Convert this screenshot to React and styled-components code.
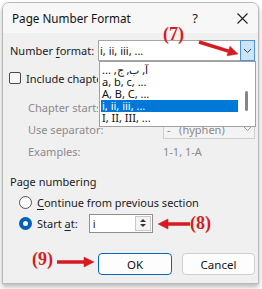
import React from 'react';
import styled, { createGlobalStyle } from 'styled-components';

const Global = createGlobalStyle`
  html, body { margin: 0; padding: 0; background: #ffffff; }
  body {
    font-family: "Noto Sans", "Open Sans", sans-serif;
    font-size: 11px;
    color: #1b1b1b;
  }
  * { box-sizing: border-box; }
`;

const Stage = styled.div`
  position: relative;
  width: 262px;
  height: 289px;
  padding: 2px 3px 0 2px;
  background: #ffffff;
  overflow: hidden;
`;

const Window = styled.div`
  width: 257px;
  border: 1px solid #b9b9b9;
  border-radius: 7px 7px 0 0;
  background: #f0f0f0;
  box-shadow: 0 3px 5px rgba(0, 0, 0, 0.28);
  overflow: hidden;
`;

const TitleBar = styled.div`
  height: 30px;
  display: flex;
  align-items: center;
  background: #f7f7f7;
  padding-left: 9px;
`;

const Title = styled.div`
  flex: 1;
  font-size: 11.7px;
  color: #111;
`;

const TitleButton = styled.div`
  width: 32px;
  height: 30px;
  display: flex;
  align-items: center;
  justify-content: center;
  color: #222;
  font-size: 13px;
  margin-right: ${p => p.$gap || 0}px;
`;

const Body = styled.div`
  padding: 0 3px 8px 7px;
  display: flex;
  flex-direction: column;
`;

const Row = styled.div`
  display: flex;
  align-items: center;
  height: ${p => p.$h || 20}px;
  margin-top: ${p => p.$mt || 0}px;
  padding-left: ${p => p.$indent || 0}px;
  color: ${p => (p.$disabled ? '#8a8a8a' : 'inherit')};
`;

const Label = styled.div`
  width: ${p => p.$w}px;
  flex: none;
  white-space: nowrap;
  overflow: hidden;
`;

const Text = styled.span`
  white-space: pre;
`;

const U = styled.span`
  text-decoration: underline;
  text-underline-offset: 2px;
`;

const Combo = styled.div`
  flex: 1;
  height: 100%;
  display: flex;
  align-items: center;
  background: ${p => (p.$disabled ? '#f3f3f3' : '#ffffff')};
  border: 1px solid ${p => (p.$disabled ? '#cfcfcf' : '#a6a6a6')};
  padding-left: ${p => (p.$disabled ? 3 : 1)}px;
  color: ${p => (p.$disabled ? '#8a8a8a' : '#111')};
`;

const ComboText = styled.div`
  flex: 1;
  white-space: pre;
`;

const DropButton = styled.div`
  width: 15px;
  height: calc(100% + 2px);
  margin: -1px -1px -1px 0;
  display: flex;
  align-items: center;
  justify-content: center;
  background: ${p => (p.$active ? '#cde4f7' : 'transparent')};
  border: 1px solid ${p => (p.$active ? '#4d93d8' : 'transparent')};
`;

const Check = styled.div`
  width: 12px;
  height: 12px;
  flex: none;
  margin-left: -1px;
  margin-right: 5px;
  border: 1px solid #4a4a4a;
  border-radius: 2px;
  background: #f7f7f7;
`;

const Radio = styled.div`
  width: 13px;
  height: 13px;
  border-radius: 50%;
  flex: none;
  margin-right: 5px;
  border: ${p => (p.$on ? '4px solid #005fb8' : '1px solid #555')};
  background: #fafafa;
`;

const SpinInput = styled.div`
  width: 64px;
  height: 19px;
  margin-left: 11px;
  display: flex;
  align-items: stretch;
  background: #fff;
  border: 1px solid #8f8f8f;
  padding-left: 3px;
`;

const SpinText = styled.div`
  flex: 1;
  display: flex;
  align-items: center;
`;

const Spinner = styled.div`
  width: 16px;
  margin: 1px;
  display: flex;
  flex-direction: column;
  justify-content: center;
  align-items: center;
  gap: 2px;
  border: 1px solid #c9c9c9;
  background: #f4f4f4;
`;

const Tri = styled.div`
  width: 0;
  height: 0;
  border-left: 3px solid transparent;
  border-right: 3px solid transparent;
  ${p => (p.$down ? 'border-top: 3px solid #333;' : 'border-bottom: 3px solid #333;')}
`;

const Buttons = styled.div`
  display: flex;
  justify-content: flex-end;
  gap: 10px;
  margin-top: 20px;
`;

const Button = styled.div`
  width: ${p => p.$w}px;
  height: 22px;
  display: flex;
  align-items: center;
  justify-content: center;
  background: #fdfdfd;
  border: 1px solid ${p => (p.$primary ? '#0067c0' : '#d0d0d0')};
  border-radius: 4px;
  color: #111;
  font-size: 11.5px;
`;

const List = styled.div`
  position: absolute;
  left: 99px;
  top: 61px;
  width: 157px;
  height: 66px;
  background: #ffffff;
  border: 1px solid #a0a0a0;
  padding: 2px 0 0 1px;
  display: flex;
`;

const Items = styled.div`
  width: 137px;
  display: flex;
  flex-direction: column;
`;

const Item = styled.div`
  height: 12px;
  line-height: 12px;
  font-size: 11px;
  padding-left: 1px;
  white-space: nowrap;
  background: ${p => (p.$sel ? '#0078d7' : 'transparent')};
  color: ${p => (p.$sel ? '#ffffff' : '#111')};
`;

const ScrollTrack = styled.div`
  flex: 1;
  display: flex;
  justify-content: center;
  padding-top: 27px;
`;

const Thumb = styled.div`
  width: 3px;
  height: 20px;
  border-radius: 2px;
  background: #868686;
`;

const Note = styled.div`
  position: absolute;
  left: ${p => p.$x}px;
  top: ${p => p.$y}px;
  font-family: "Liberation Serif", "DejaVu Serif", serif;
  font-weight: bold;
  font-size: 18px;
  line-height: 18px;
  color: #d71a22;
`;

const Arrows = styled.svg`
  position: absolute;
  left: 0;
  top: 0;
  pointer-events: none;
`;

const Chevron = ({ color = '#333' }) => (
  <svg width="9" height="6" viewBox="0 0 9 6">
    <path d="M1 1 L4.5 4.5 L8 1" fill="none" stroke={color} strokeWidth="1" />
  </svg>
);

const CloseX = () => (
  <svg width="11" height="11" viewBox="0 0 11 11">
    <path d="M0.5 0.5 L10.5 10.5 M10.5 0.5 L0.5 10.5" stroke="#1f1f1f" strokeWidth="1.1" />
  </svg>
);

const Arrow = ({ x1, y1, x2, y2 }) => {
  const dx = x2 - x1;
  const dy = y2 - y1;
  const len = Math.hypot(dx, dy);
  const ux = dx / len;
  const uy = dy / len;
  const hl = 10;
  const hw = 5;
  const bx = x2 - ux * hl;
  const by = y2 - uy * hl;
  const px = -uy * hw;
  const py = ux * hw;
  return (
    <g fill="#d71a22" stroke="#d71a22">
      <line x1={x1} y1={y1} x2={bx} y2={by} strokeWidth="3.5" />
      <polygon
        points={`${x2},${y2} ${bx + px},${by + py} ${bx - px},${by - py}`}
        strokeWidth="0.5"
      />
    </g>
  );
};

export default function App() {
  return (
    <>
      <Global />
      <Stage>
        <Window>
          <TitleBar>
            <Title>Page Number Format</Title>
            <TitleButton $gap={15}>?</TitleButton>
            <TitleButton>
              <CloseX />
            </TitleButton>
          </TitleBar>
          <Body>
            <Row $mt={7} $h={21}>
              <Label $w={88}>
                Number <U>f</U>ormat:
              </Label>
              <Combo>
                <ComboText>i, ii, iii, ...</ComboText>
                <DropButton $active>
                  <Chevron color="#2a4a6a" />
                </DropButton>
              </Combo>
            </Row>
            <Row $mt={7}>
              <Check />
              <Label $w={72}>Include chapter number</Label>
            </Row>
            <Row $mt={9} $indent={18} $disabled>
              <Label $w={70}>Chapter starts with style:</Label>
            </Row>
            <Row $mt={2} $indent={18} $disabled>
              <Label $w={135}>Use separator:</Label>
              <Combo $disabled>
                <ComboText>-   (hyphen)</ComboText>
                <DropButton>
                  <Chevron color="#999" />
                </DropButton>
              </Combo>
            </Row>
            <Row $mt={2} $indent={18} $disabled>
              <Label $w={135}>Examples:</Label>
              <Text>1-1, 1-A</Text>
            </Row>
            <Row $mt={10}>
              <Text>Page numbering</Text>
            </Row>
            <Row $mt={1} $indent={9}>
              <Radio />
              <Text>
                <U>C</U>ontinue from previous section
              </Text>
            </Row>
            <Row $mt={1} $indent={9}>
              <Radio $on />
              <Text>
                Start <U>a</U>t:
              </Text>
              <SpinInput>
                <SpinText>i</SpinText>
                <Spinner>
                  <Tri />
                  <Tri $down />
                </Spinner>
              </SpinInput>
            </Row>
            <Buttons>
              <Button $w={74} $primary>OK</Button>
              <Button $w={73}>Cancel</Button>
            </Buttons>
          </Body>
        </Window>

        <List>
          <Items>
            <Item>
              <span dir="rtl">آ, ب, ج, ...</span>
            </Item>
            <Item>a, b, c, ...</Item>
            <Item>A, B, C, ...</Item>
            <Item $sel>i, ii, iii, ...</Item>
            <Item>I, II, III, ...</Item>
          </Items>
          <ScrollTrack>
            <Thumb />
          </ScrollTrack>
        </List>

        <Note $x={163} $y={25}>(7)</Note>
        <Note $x={190} $y={214}>(8)</Note>
        <Note $x={32} $y={250}>(9)</Note>

        <Arrows width="262" height="289" viewBox="0 0 262 289">
          <Arrow x1={199} y1={42} x2={238} y2={54} />
          <Arrow x1={190} y1={224} x2={158} y2={224} />
          <Arrow x1={57} y1={262} x2={94} y2={262} />
        </Arrows>
      </Stage>
    </>
  );
}
